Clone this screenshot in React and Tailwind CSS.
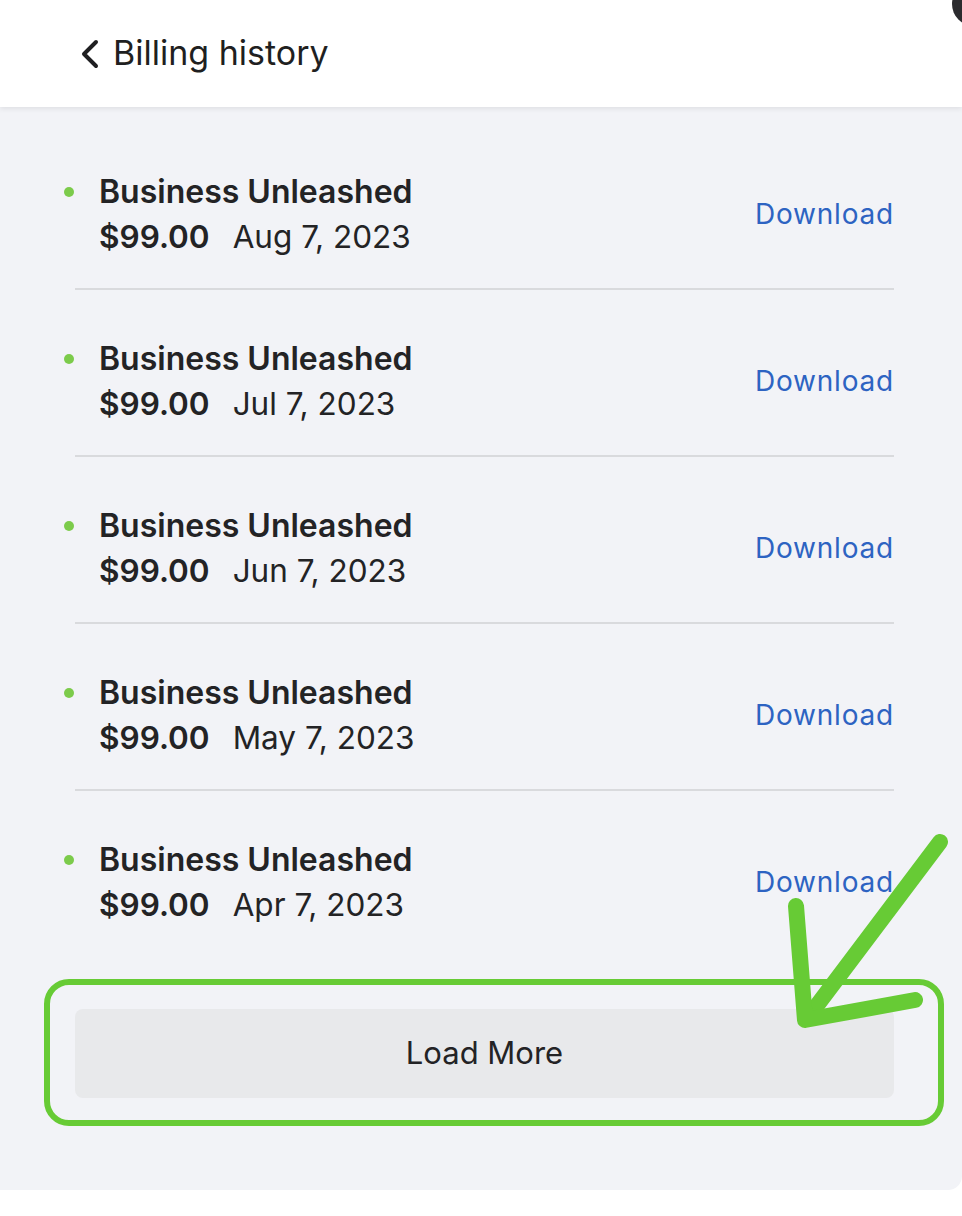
import React from 'react'

const invoices = [
    { plan: 'Business Unleashed', amount: '$99.00', date: 'Aug 7, 2023' },
    { plan: 'Business Unleashed', amount: '$99.00', date: 'Jul 7, 2023' },
    { plan: 'Business Unleashed', amount: '$99.00', date: 'Jun 7, 2023' },
    { plan: 'Business Unleashed', amount: '$99.00', date: 'May 7, 2023' },
    { plan: 'Business Unleashed', amount: '$99.00', date: 'Apr 7, 2023' },
]

function InvoiceRow({ invoice, last }) {
    return (
        <div className={'flex items-center pl-[24px] pt-[46px] pb-[29px] ' + (last ? '' : 'border-b-2 border-[#d9dadd]')}>
            <span className="h-[10px] w-[10px] rounded-full bg-[#7ccb4b] self-start mt-[18px] mr-[25px] -ml-[35px]" />
            <div className="flex-1 flex flex-col">
                <span className="text-[32px] leading-[45px] font-semibold text-[#232325]">{invoice.plan}</span>
                <span className="text-[31.5px] leading-[45px] text-[#232325]">
                    <span className="font-semibold">{invoice.amount}</span>
                    <span className="ml-[23px]">{invoice.date}</span>
                </span>
            </div>
            <a className="text-[28px] text-[#2d63c2] tracking-[0.8px]">Download</a>
        </div>
    )
}

export default function App() {
    return (
        <div className="relative w-[962px] h-[1216px] bg-white overflow-hidden" style={{ fontFamily: 'Inter, "Open Sans", sans-serif' }}>
            {/* header */}
            <div className="relative z-10 h-[107px] bg-white flex items-center pl-[78px] shadow-[0_2px_5px_rgba(0,0,0,0.08)]">
                <svg width="24" height="30" viewBox="0 0 24 30" className="mr-[11px]">
                    <path d="M18 3 L6 15 L18 27" fill="none" stroke="#1f1f21" strokeWidth="4" strokeLinecap="round" strokeLinejoin="round" />
                </svg>
                <span className="text-[34px] text-[#1f1f21] -mt-[2px]">Billing history</span>
            </div>
            <div className="absolute z-20 top-[-18px] left-[952px] h-[44px] w-[44px] rounded-full bg-[#2b2b2e]" />

            {/* list */}
            <div className="h-[1083px] bg-[#f2f3f7] rounded-br-[14px] flex flex-col">
                <div className="ml-[75px] mr-[68px] pt-[16px]">
                    {invoices.map((inv, i) => (
                        <InvoiceRow key={inv.date} invoice={inv} last={i === invoices.length - 1} />
                    ))}
                </div>
                <div className="ml-[75px] mr-[68px] mt-[53px]">
                    <button className="w-full h-[89px] rounded-[8px] bg-[#e8e9eb] text-[31px] text-[#232325]">Load More</button>
                </div>
            </div>

            {/* annotation */}
            <svg className="absolute z-20 left-0 top-0 pointer-events-none" width="962" height="1216">
                <rect x="47" y="982" width="894" height="141" rx="22" fill="none" stroke="#67cb35" strokeWidth="6" />
                <path d="M940 842 L812 1012" fill="none" stroke="#67cb35" strokeWidth="16" strokeLinecap="round" />
                <path d="M796 906 L805 1020 L915 1000" fill="none" stroke="#67cb35" strokeWidth="16" strokeLinecap="round" strokeLinejoin="round" />
            </svg>
        </div>
    )
}
